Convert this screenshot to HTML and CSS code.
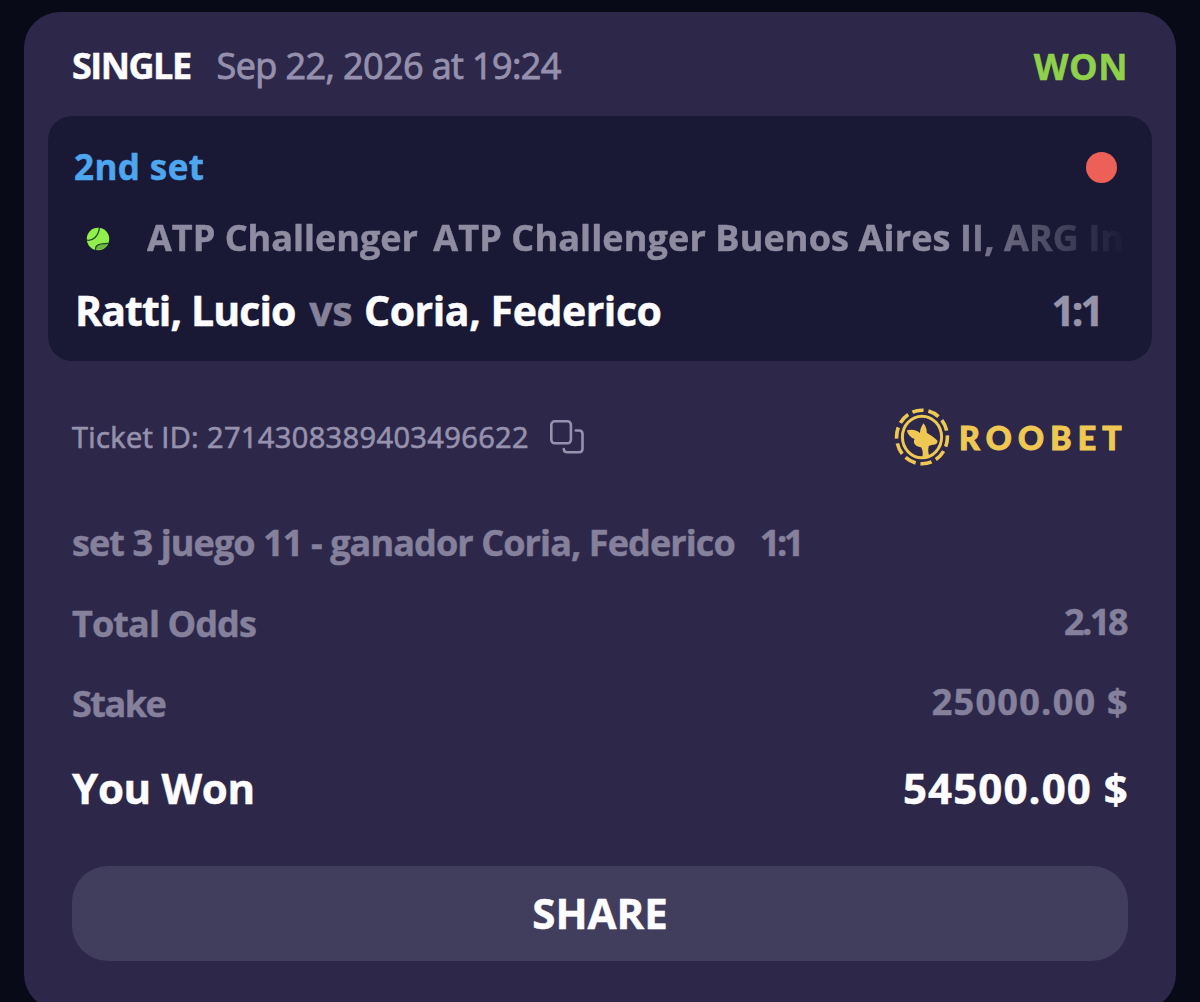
FILE: index.html
```html
<!DOCTYPE html>
<html lang="en">
<head>
<meta charset="utf-8">
<title>Bet ticket</title>
<link rel="stylesheet" href="styles.css">
</head>
<body>
<main class="ticket">
  <header class="ticket-head">
    <span class="kind">SINGLE</span>
    <span class="date">Sep 22, 2026 at 19:24</span>
    <span class="status">WON</span>
  </header>

  <section class="event">
    <div class="event-top">
      <span class="period">2nd set</span>
      <span class="live-dot"></span>
    </div>
    <div class="league">
      <svg class="ball" viewBox="0 0 24 24">
        <circle cx="12" cy="12" r="11.2" fill="#92ee4c"/>
        <path d="M10 22.6C10 18.4 15 17 22 16.7A11.2 11.2 0 0 1 10 22.6Z" fill="#6fb643"/>
        <path d="M13.4.8C12.9 6 11.3 8.400 8.800 10.800S4.500 13.800.9 13.200M9.600 22.900C9 18.500 13 16.200 22.500 16.300" fill="none" stroke="#1c4a1f" stroke-width="1.300"/>
      </svg>
      <span class="league-name">ATP Challenger <span class="tournament">ATP Challenger Buenos Aires II, ARG In</span></span>
    </div>
    <div class="match">
      <span class="teams"><span class="home">Ratti, Lucio</span> <span class="vs">vs</span> <span class="away">Coria, Federico</span></span>
      <span class="score">1:1</span>
    </div>
  </section>

  <div class="ticket-id">
    <span class="id-text">Ticket ID: 2714308389403496622</span>
    <svg class="copy" viewBox="0 0 36 36" fill="none" stroke="#9691ad" stroke-width="2.600" stroke-linecap="round">
      <rect x="2.300" y="2.300" width="19.600" height="22" rx="3.500"/>
      <path d="M26.800 11.500h3.200q3.500 0 3.500 3.500v14.800q0 3.500-3.500 3.500H18.300q-3.500 0-3.500-3.200"/>
    </svg>
    <div class="brand">
      <svg class="chip" viewBox="0 0 56 58">
        <g fill="none" stroke="#efc853">
          <ellipse cx="28" cy="29" rx="25.400" ry="26.800" stroke-width="3.600" pathLength="100" stroke-dasharray="7 3" stroke-dashoffset="1"/>
          <ellipse cx="28" cy="29" rx="19.600" ry="20.800" stroke-width="3"/>
        </g>
        <path d="M12.800 22.400C17.500 21.200 22.500 22 26 25C26 21.500 27.200 18 29.600 15.200C31.700 18 33 21.500 32.800 24.800C36.500 26.800 40 29.500 43.300 32.600C43.800 34.500 43 36 41 36.400C38.500 36.800 36.500 37 34.800 38C33.800 41.500 34.200 45 35.500 49C33 50.200 30.500 50.600 28 50.500C29.300 46 29 42.500 27.300 39.400C23.500 38.800 20.500 37 20 34.500C19.700 33 20 32 20.600 31C16.600 29.600 14 26.500 12.800 22.400Z" fill="#efc853"/>
      </svg>
      <span class="brand-name">ROOBET</span>
    </div>
  </div>

  <div class="rows">
    <div class="row"><span class="pick">set 3 juego 11 - ganador Coria, Federico</span><span class="pick-score">1:1</span></div>
    <div class="row"><span class="odds-label">Total Odds</span><span class="odds">2.18</span></div>
    <div class="row"><span class="stake-label">Stake</span><span class="stake">25000.00 $</span></div>
    <div class="row won"><span class="won-label">You Won</span><span class="won-sum">54500.00 $</span></div>
  </div>

  <button class="share">SHARE</button>
</main>
</body>
</html>
```
FILE: styles.css
```css
* { box-sizing: border-box; }
html, body { height: 1002px; overflow: hidden; }
body {
  margin: 0;
  padding: 12px 24px 0;
  background: #080a18;
  color: #fdfcff;
  font-family: "Open Sans", "Noto Sans", sans-serif;
  font-weight: 700;
  -webkit-text-stroke: 0.500px currentColor;
}
span { white-space: nowrap; -webkit-text-stroke-color: currentColor; }
.ticket {
  height: 998px;
  padding: 0 24px;
  border-radius: 36px;
  background: #2d284a;
}
.ticket-head {
  display: flex;
  align-items: center;
  height: 104px;
  padding: 2px 24px 0;
  font-size: 36px;
}
.kind { letter-spacing: -1.500px; }
.date { margin-left: 26px; color: #9590ad; font-weight: 400; letter-spacing: -0.600px; -webkit-text-stroke-width: 0.900px; }
.status { margin: 2px 0 0 auto; color: #8fd14b; letter-spacing: 0.500px; }

.event {
  height: 245px;
  padding: 14px 27px 0;
  border-radius: 24px;
  background: #1a1935;
}
.event-top, .league, .match { display: flex; align-items: center; height: 72px; }
.event-top { justify-content: space-between; padding-right: 8px; }
.period { margin-left: -1px; color: #4ea6ef; font-size: 35px; letter-spacing: 0.400px; }
.live-dot { width: 31px; height: 31px; margin-top: 2px; border-radius: 50%; background: #ed6058; }
.ball { width: 24px; height: 24px; margin: 2px 37px 0 11px; flex: none; }
.league-name {
  margin-top: -1px;
  color: #8f8ca2;
  font-size: 36px;
  -webkit-mask-image: linear-gradient(90deg, #000 800px, transparent 980px);
  mask-image: linear-gradient(90deg, #000 800px, transparent 980px);
}
.tournament { margin-left: 6px; letter-spacing: 0.130px; }
.match { justify-content: space-between; padding-right: 24px; font-size: 41px; }
.home { letter-spacing: -0.900px; }
.vs { margin: 0 1px 0 3px; color: #85829a; letter-spacing: -0.300px; }
.away { letter-spacing: -0.450px; }
.score { color: #9794aa; letter-spacing: -3px; }

.ticket-id { display: flex; align-items: center; height: 152px; padding: 0 24px; }
.id-text { margin-top: -2px; color: #9691ad; font-size: 29px; font-weight: 400; letter-spacing: 0.370px; -webkit-text-stroke-width: 0.700px; }
.copy { width: 36px; height: 36px; margin: -1px 0 0 20px; }
.brand { display: flex; align-items: center; margin-left: auto; }
.chip { width: 56px; height: 58px; }
.brand-name {
  margin-left: 9px;
  color: #efc853;
  -webkit-text-stroke-width: 1px;
  font-family: Lato, sans-serif;
  font-size: 32px;
  font-weight: 900;
  letter-spacing: 6.300px;
}

.rows { padding: 0 24px; color: #85809b; font-size: 36px; }
.row { display: flex; align-items: center; justify-content: space-between; height: 80px; }
.row:first-child { justify-content: flex-start; height: 58px; margin-bottom: 12px; }
.pick { letter-spacing: -0.900px; }
.pick-score { margin-left: 25px; letter-spacing: -3.500px; }
.odds-label { letter-spacing: -0.900px; }
.stake-label { letter-spacing: -1.500px; }
.odds { margin: -4px 2px 0 0; letter-spacing: -2.500px; }
.stake { margin: -4px -1px 0 0; letter-spacing: 1.300px; }
.won { height: 88px; color: #fdfcff; font-size: 42px; }
.won-label { letter-spacing: -0.300px; }
.won-sum { margin-right: -1px; letter-spacing: 1.100px; }

.share {
  display: flex;
  align-items: center;
  justify-content: center;
  width: 1056px;
  height: 95px;
  margin: 35px 24px 0;
  padding: 0 0 2px;
  border: 0;
  border-radius: 36px;
  background: #413e5d;
  color: #fdfcff;
  font: inherit;
  font-size: 42px;
}
```
